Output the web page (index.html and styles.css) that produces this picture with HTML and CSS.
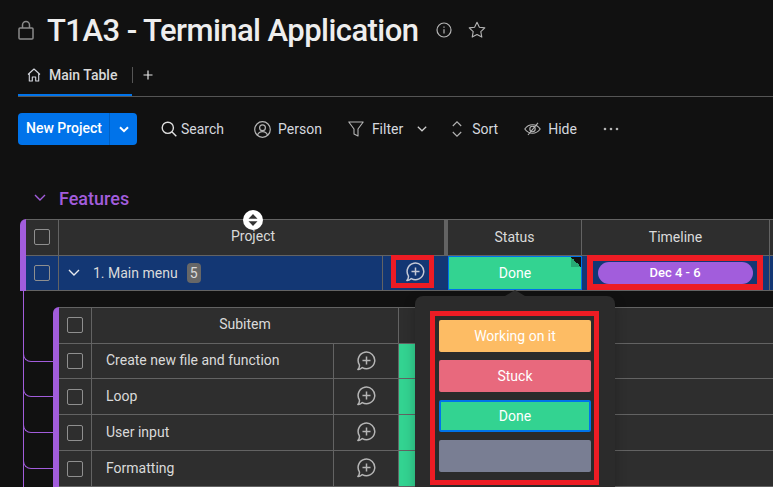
FILE: index.html
```html
<!DOCTYPE html>
<html>
<head>
    <meta charset="UTF-8">
    <title>T1A3 - Terminal Application</title>
    <link rel="stylesheet" href="styles.css">
</head>
<body>
<div class="page">
    <div class="title-row">
        <svg class="lock-icon" width="16" height="20" viewBox="0 0 16 20" fill="none" stroke="#8b8b8b" stroke-width="1.5"><rect x="1" y="8" width="14" height="11" rx="1"/><path d="M4.500 8V5a3.500 3.500 0 0 1 7 0v3"/></svg>
        <h1>T1A3 - Terminal Application</h1>
        <svg class="info-icon" width="16" height="16" viewBox="0 0 16 16" fill="none" stroke="#b5b5b5" stroke-width="1.2"><circle cx="8" cy="8" r="7"/><path d="M8 7.2v4.2M8 4.4v1.3"/></svg>
        <svg class="star-icon" width="18" height="18" viewBox="0 0 18 18" fill="none" stroke="#b5b5b5" stroke-width="1.1" stroke-linejoin="round"><path d="M9 1.2l2.4 5 5.4.7-4 3.8 1 5.4L9 13.5l-4.8 2.6 1-5.4-4-3.8 5.4-.7z"/></svg>
    </div>

    <div class="tabs">
        <div class="tab">
            <svg width="14" height="14" viewBox="0 0 14 14" fill="none" stroke="#d5d8df" stroke-width="1.1" stroke-linejoin="round"><path d="M1 6.5L7 1l6 5.5M2.300 5.500V13h3V9h3.400v4h3V5.500"/></svg>
            <span>Main Table</span>
        </div>
        <div class="tab-add">
            <svg width="10" height="10" viewBox="0 0 10 10" stroke="#e6e6e6" stroke-width="1.2"><path d="M5 .5v9M.5 5h9"/></svg>
        </div>
    </div>

    <div class="toolbar">
        <div class="new-btn">
            <span class="new-label">New Project</span>
            <span class="new-arrow">
                <svg width="10" height="7" viewBox="0 0 10 7" fill="none" stroke="#fff" stroke-width="2"><path d="M1 1.2l4 4 4-4"/></svg>
            </span>
        </div>
        <div class="tool tool-search">
            <svg width="16" height="16" viewBox="0 0 16 16" fill="none" stroke="#e0e0e0" stroke-width="1.4"><circle cx="6.800" cy="6.800" r="5.600"/><path d="M10.800 10.800l4.500 4.500"/></svg>
            <span>Search</span>
        </div>
        <div class="tool tool-person">
            <svg width="17" height="17" viewBox="0 0 17 17" fill="none" stroke="#b5b5b5" stroke-width="1.2"><circle cx="8.500" cy="8.500" r="7.800"/><circle cx="8.500" cy="6.800" r="2.900"/><path d="M3.400 14.300c1-2.600 2.800-3.600 5.100-3.600s4.100 1 5.100 3.600"/></svg>
            <span>Person</span>
        </div>
        <div class="tool tool-filter">
            <svg width="16" height="16" viewBox="0 0 16 16" fill="none" stroke="#b5b5b5" stroke-width="1.1" stroke-linejoin="round"><path d="M.8 1h14.400L10 8v7l-4-2V8z"/></svg>
            <span>Filter</span>
            <svg class="filter-arrow" width="10" height="6" viewBox="0 0 10 6" fill="none" stroke="#d0d0d0" stroke-width="1.2"><path d="M.8.8L5 4.800 9.200.8"/></svg>
        </div>
        <div class="tool tool-sort">
            <svg width="10" height="16" viewBox="0 0 10 16" fill="none" stroke="#b5b5b5" stroke-width="1.1"><path d="M.8 5L5 .8 9.200 5M.8 11L5 15.200 9.200 11"/></svg>
            <span>Sort</span>
        </div>
        <div class="tool tool-hide">
            <svg width="17" height="14" viewBox="0 0 17 14" fill="none" stroke="#b5b5b5" stroke-width="1.1"><path d="M.8 7c2-2.800 4.600-4.200 7.700-4.200S14.200 4.200 16.200 7c-2 2.800-4.600 4.200-7.700 4.200S2.800 9.800.8 7z"/><circle cx="8.500" cy="7" r="2.700"/><path d="M14 .8L4 13"/></svg>
            <span>Hide</span>
        </div>
        <svg class="tool-more" width="16" height="4" viewBox="0 0 16 4" fill="#b5b5b5"><circle cx="2" cy="2" r="1.300"/><circle cx="8" cy="2" r="1.300"/><circle cx="14" cy="2" r="1.300"/></svg>
    </div>

    <div class="section-title">
        <svg width="12" height="8" viewBox="0 0 12 8" fill="none" stroke="#a25ddc" stroke-width="1.4"><path d="M1 1l5 5 5-5"/></svg>
        <span>Features</span>
    </div>

    <div class="group">
        <div class="group-bar"></div>
        <div class="group-table">
            <div class="head-row">
                <div class="cell check-cell"><span class="check"></span></div>
                <div class="cell head-name">
                    Project
                    <span class="sort-handle">
                        <svg width="10" height="12" viewBox="0 0 10 12" fill="#333"><path d="M5 0l4.500 4.700h-9zM5 12L.5 7.300h9z"/></svg>
                    </span>
                </div>
                <div class="cell head-status">Status</div>
                <div class="cell head-timeline">Timeline</div>
                <div class="cell"></div>
            </div>
            <div class="item-row">
                <div class="cell check-cell"><span class="check"></span></div>
                <div class="cell item-name">
                    <svg class="item-arrow" width="12" height="8" viewBox="0 0 12 8" fill="none" stroke="#e6e9ef" stroke-width="1.4"><path d="M1 1l5 5 5-5"/></svg>
                    <span>1. Main menu</span>
                    <span class="count">5</span>
                </div>
                <div class="cell item-comment">
                    <div class="red-box comment-box">
                        <svg width="20" height="20" viewBox="0 0 20 20" fill="none" stroke="#c5c9d6" stroke-width="1.500" stroke-linejoin="round"><path d="M3.400 13.800c.3 1.600-.3 3.200-1.500 4.600 1.700.2 3.100-.4 4.400-1.800A8.300 8.300 0 1 0 3.400 13.800z"/><path d="M10.500 5.500v8M6.500 9.500h8"/></svg>
                    </div>
                </div>
                <div class="cell item-status">Done<span class="fold"></span></div>
                <div class="cell item-timeline">
                    <div class="red-box timeline-box"><div class="pill">Dec 4 - 6</div></div>
                </div>
                <div class="cell"></div>
            </div>
        </div>
    </div>

    <div class="sub-wrap">
        <div class="sub-bar"></div>
        <div class="sub-table">
            <div class="sub-head">
                <div class="cell check-cell"><span class="check"></span></div>
                <div class="cell head-sub">Subitem</div>
                <div class="cell"></div>
            </div>
            <div class="sub-row">
                <div class="cell check-cell"><span class="check"></span></div>
                <div class="cell sub-name">Create new file and function</div>
                <div class="cell sub-comment">
                    <svg width="20" height="20" viewBox="0 0 20 20" fill="none" stroke="#b5b5b5" stroke-width="1.500" stroke-linejoin="round"><path d="M3.400 13.800c.3 1.600-.3 3.200-1.500 4.600 1.700.2 3.100-.4 4.400-1.800A8.300 8.300 0 1 0 3.400 13.800z"/><path d="M10.500 5.500v8M6.500 9.500h8"/></svg>
                </div>
                <div class="cell sub-status"></div>
                <div class="cell"></div>
            </div>
            <div class="sub-row">
                <div class="cell check-cell"><span class="check"></span></div>
                <div class="cell sub-name">Loop</div>
                <div class="cell sub-comment">
                    <svg width="20" height="20" viewBox="0 0 20 20" fill="none" stroke="#b5b5b5" stroke-width="1.500" stroke-linejoin="round"><path d="M3.400 13.800c.3 1.600-.3 3.200-1.500 4.600 1.700.2 3.100-.4 4.400-1.800A8.300 8.300 0 1 0 3.400 13.800z"/><path d="M10.500 5.500v8M6.500 9.500h8"/></svg>
                </div>
                <div class="cell sub-status"></div>
                <div class="cell"></div>
            </div>
            <div class="sub-row">
                <div class="cell check-cell"><span class="check"></span></div>
                <div class="cell sub-name">User input</div>
                <div class="cell sub-comment">
                    <svg width="20" height="20" viewBox="0 0 20 20" fill="none" stroke="#b5b5b5" stroke-width="1.500" stroke-linejoin="round"><path d="M3.400 13.800c.3 1.600-.3 3.200-1.500 4.600 1.700.2 3.100-.4 4.400-1.800A8.300 8.300 0 1 0 3.400 13.800z"/><path d="M10.500 5.500v8M6.500 9.500h8"/></svg>
                </div>
                <div class="cell sub-status"></div>
                <div class="cell"></div>
            </div>
            <div class="sub-row">
                <div class="cell check-cell"><span class="check"></span></div>
                <div class="cell sub-name">Formatting</div>
                <div class="cell sub-comment">
                    <svg width="20" height="20" viewBox="0 0 20 20" fill="none" stroke="#b5b5b5" stroke-width="1.500" stroke-linejoin="round"><path d="M3.400 13.800c.3 1.600-.3 3.200-1.500 4.600 1.700.2 3.100-.4 4.400-1.800A8.300 8.300 0 1 0 3.400 13.800z"/><path d="M10.500 5.500v8M6.500 9.500h8"/></svg>
                </div>
                <div class="cell sub-status"></div>
                <div class="cell"></div>
            </div>
        </div>
    </div>

    <div class="status-pop">
        <div class="red-box pop-box">
            <div class="pop-item working">Working on it</div>
            <div class="pop-item stuck">Stuck</div>
            <div class="pop-item done">Done</div>
            <div class="pop-item blank"></div>
        </div>
    </div>
</div>
</body>
</html>
```

FILE: styles.css
```css
* {
    box-sizing: border-box;
}

html, body {
    margin: 0;
    height: 100%;
    overflow: hidden;
    background-color: #111111;
}

.page {
    position: relative;
    height: 487px;
    overflow: hidden;
    font-family: Roboto, Arial, sans-serif;
    font-size: 14px;
    color: #dadada;
}

/* title */
.title-row {
    display: flex;
    align-items: center;
    height: 60px;
    padding-left: 18px;
}

.title-row h1 {
    margin: 0 0 0 13px;
    font-size: 31px;
    font-weight: 500;
    letter-spacing: -0.55px;
    color: #eeeeee;
    white-space: nowrap;
}

.lock-icon {
    flex: none;
}

.info-icon {
    margin-left: 18px;
}

.star-icon {
    margin-left: 16px;
}

/* tabs */
.tabs {
    display: flex;
    align-items: center;
    height: 37px;
    margin-left: 18px;
    border-bottom: 1px solid #555555;
}

.tab {
    display: flex;
    align-items: center;
    gap: 8px;
    width: 114px;
    height: 36px;
    padding: 0 0 5px 9px;
    border-bottom: 2px solid #0073ea;
    font-weight: 500;
    color: #d9d9d9;
}

.tab-add {
    display: flex;
    align-items: center;
    height: 16px;
    margin-bottom: 6px;
    padding-left: 10px;
    border-left: 1px solid #555555;
}

/* toolbar */
.toolbar {
    display: flex;
    align-items: center;
    height: 32px;
    margin: 16px 0 0 18px;
}

.new-btn {
    display: flex;
    width: 119px;
    height: 32px;
    border-radius: 4px;
    background-color: #0073ea;
    color: #ffffff;
    font-weight: 500;
}

.new-label {
    width: 92px;
    padding-left: 8px;
    line-height: 30px;
    white-space: nowrap;
    border-right: 1px solid #0060c4;
}

.new-arrow {
    display: flex;
    flex: 1;
    align-items: center;
    justify-content: center;
}

.tool {
    display: flex;
    align-items: center;
    color: #d5d8df;
    white-space: nowrap;
}

.tool-search {
    gap: 5px;
    margin-left: 24px;
}

.tool-search span {
    margin-left: -1px;
}

.tool-person {
    gap: 7px;
    margin-left: 30px;
}

.tool-filter {
    gap: 8px;
    margin-left: 26px;
}

.filter-arrow {
    margin-left: 6px;
}

.tool-sort {
    gap: 10px;
    margin-left: 25px;
}

.tool-hide {
    gap: 7px;
    margin-left: 26px;
}

.tool-more {
    margin-left: 26px;
}

/* group */
.section-title {
    display: flex;
    align-items: center;
    gap: 13px;
    height: 24px;
    margin: 41px 0 0 34px;
    font-size: 18px;
    font-weight: 500;
    color: #a25ddc;
}

.group {
    display: flex;
    width: 753px;
    margin: 9px 0 0 20px;
}

.group-bar {
    flex: none;
    width: 6px;
    border-top-left-radius: 6px;
    background-color: #a25ddc;
}

.group-table {
    flex: 1;
    min-width: 0;
}

.cell {
    display: flex;
    align-items: center;
    justify-content: center;
    min-width: 0;
    border-right: 1px solid #636363;
    white-space: nowrap;
}

.cell:last-child {
    border-right: none;
}

.check {
    display: block;
    width: 16px;
    height: 16px;
    border: 1px solid #8f8f8f;
    border-radius: 2px;
}

.head-row {
    display: grid;
    grid-template-columns: 33px 389px 134px 188px 1fr;
    height: 37px;
    border-top: 1px solid #636363;
    border-bottom: 1px solid #636363;
    background-color: #2e2e2e;
}

.head-row .check,
.sub-head .check {
    margin-bottom: 1px;
}

.head-name {
    position: relative;
    padding: 0 0 3px 3px;
    border-right: 4px solid #636363;
}

.head-status,
.head-timeline {
    padding-bottom: 1px;
}

.sort-handle {
    position: absolute;
    top: -10px;
    left: 184px;
    display: flex;
    align-items: center;
    justify-content: center;
    width: 20px;
    height: 20px;
    border-radius: 50%;
    background-color: #ffffff;
}

.item-row {
    display: grid;
    grid-template-columns: 33px 324px 65px 134px 188px 1fr;
    height: 35px;
    border-bottom: 1px solid #636363;
    background-color: #133774;
}

.item-name {
    justify-content: flex-start;
    padding-left: 9px;
}

.item-arrow {
    margin-right: 13px;
}

.count {
    width: 14px;
    height: 20px;
    margin-left: 9px;
    border-radius: 4px;
    background-color: #676767;
    line-height: 20px;
    text-align: center;
}

.item-comment {
    align-items: flex-start;
    justify-content: flex-start;
    padding-left: 8px;
    border-right: none;
}

.red-box {
    border: 5px solid #ed1c24;
}

.comment-box {
    display: flex;
    align-items: center;
    justify-content: center;
    width: 43px;
    height: 33px;
    margin-top: -1px;
    padding: 1px 0 0 5px;
}

.item-status {
    position: relative;
    border: 1px solid #0073ea;
    background-color: #33d391;
    color: #ffffff;
}

.fold {
    position: absolute;
    top: 0;
    right: 0;
    width: 10px;
    height: 10px;
    background: linear-gradient(45deg, #27a974 50%, #111111 50%);
}

.item-timeline {
    align-items: flex-start;
    justify-content: flex-start;
    padding-left: 5px;
}

.timeline-box {
    display: flex;
    align-items: center;
    justify-content: center;
    width: 176px;
    height: 35px;
    margin-top: -1px;
    border-width: 6px;
}

.pill {
    width: 155px;
    height: 22px;
    border-radius: 11px;
    background-color: #a25ddc;
    color: #ffffff;
    font-size: 13px;
    font-weight: 500;
    line-height: 22px;
    text-align: center;
}

/* subitems */
.sub-wrap {
    display: flex;
    height: 196px;
    margin-left: 23px;
    padding: 16px 0 0 29px;
    border-left: 1px solid #a25ddc;
}

.sub-bar {
    flex: none;
    width: 6px;
    border-top-left-radius: 6px;
    background-color: #a25ddc;
}

.sub-table {
    flex: 1;
    min-width: 0;
}

.sub-head {
    display: grid;
    grid-template-columns: 33px 307px 1fr;
    height: 37px;
    border-top: 1px solid #636363;
    border-bottom: 1px solid #636363;
    background-color: #2e2e2e;
}

.head-sub {
    padding-bottom: 3px;
}

.sub-row {
    position: relative;
    display: grid;
    grid-template-columns: 33px 242px 65px 134px 1fr;
    height: 36px;
    border-bottom: 1px solid #636363;
    background-color: #2e2e2e;
}

.sub-head + .sub-row {
    height: 35px;
}

/* tree branch back to the line on the left */
.sub-row::before {
    content: "";
    position: absolute;
    left: -36px;
    top: 5px;
    width: 30px;
    height: 12px;
    border-left: 1px solid #a25ddc;
    border-bottom: 1px solid #a25ddc;
    border-bottom-left-radius: 8px;
}

.sub-name {
    justify-content: flex-start;
    padding: 0 0 2px 14px;
}

.sub-comment svg {
    margin-bottom: 1px;
}

.sub-status {
    border-right: none;
    background-color: #33d391;
}

/* status dropdown */
.status-pop {
    position: absolute;
    top: 296px;
    left: 415px;
    width: 200px;
    height: 210px;
    padding: 15px;
    border-radius: 8px;
    background-color: #2b2b2b;
    box-shadow: 0 4px 12px rgba(0, 0, 0, 0.25);
}

.status-pop::before {
    content: "";
    position: absolute;
    top: -6px;
    left: 90px;
    width: 20px;
    height: 6px;
    background-color: #2b2b2b;
    clip-path: polygon(50% 0, 100% 100%, 0 100%);
}

.pop-box {
    display: flex;
    flex-direction: column;
    gap: 8px;
    width: 169px;
    height: 174px;
    padding: 4px 3px 8px 4px;
}

.pop-item {
    height: 32px;
    border-radius: 2px;
    color: #ffffff;
    line-height: 32px;
    text-align: center;
}

.working {
    background-color: #fdbc64;
}

.stuck {
    background-color: #e8697d;
}

.done {
    border: 2px solid #0073ea;
    background-color: #33d391;
    line-height: 28px;
}

.blank {
    background-color: #797e93;
}
```
